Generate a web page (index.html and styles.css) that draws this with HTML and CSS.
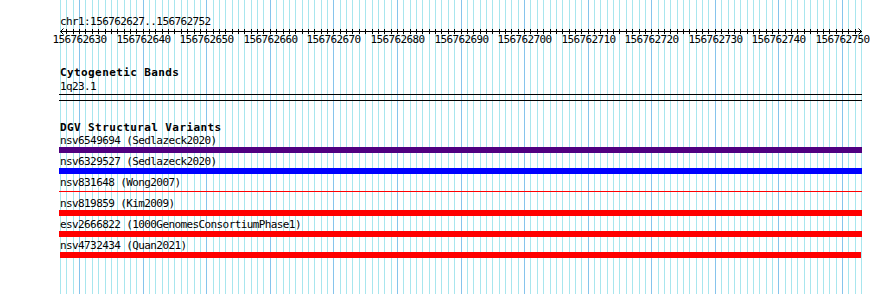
FILE: index.html
```html
<!DOCTYPE html>
<html lang="en">
<head>
    <meta charset="UTF-8">
    <title>Genome Browser - chr1:156762627..156762752</title>
    <link rel="stylesheet" href="styles.css">
</head>
<body>
    <div class="browser">
        <!-- base position guidelines, filled in by the script below -->
        <svg class="guides" id="guides" width="890" height="294" shape-rendering="crispEdges"></svg>

        <div class="tracks">
            <div class="position">chr1:156762627..156762752</div>
            <svg class="ruler" id="ruler" width="890" height="19" shape-rendering="crispEdges"></svg>

            <section class="track cyto">
                <div class="track-title">Cytogenetic Bands</div>
                <div class="label">1q23.1</div>
                <div class="band"></div>
            </section>

            <section class="track dgv">
                <div class="track-title">DGV Structural Variants</div>
                <div class="item">
                    <div class="label">nsv6549694 (Sedlazeck2020)</div>
                    <div class="bar purple"></div>
                </div>
                <div class="item">
                    <div class="label">nsv6329527 (Sedlazeck2020)</div>
                    <div class="bar blue"></div>
                </div>
                <div class="item">
                    <div class="label">nsv831648 (Wong2007)</div>
                    <div class="bar thin"></div>
                </div>
                <div class="item">
                    <div class="label">nsv819859 (Kim2009)</div>
                    <div class="bar red"></div>
                </div>
                <div class="item">
                    <div class="label">esv2666822 (1000GenomesConsortiumPhase1)</div>
                    <div class="bar red"></div>
                </div>
                <div class="item">
                    <div class="label">nsv4732434 (Quan2021)</div>
                    <div class="bar red inside"></div>
                </div>
            </section>
        </div>
    </div>

    <script>
        // Ventana: 126 bases entre x=60 y x=861
        const start = 156762627;
        const bases = 126;
        const left = 60;
        const span = 801;
        const ns = 'http://www.w3.org/2000/svg';

        function baseX(i) {
            return left + Math.round(i * span / bases);
        }

        function add(parent, tag, attrs, text) {
            const el = document.createElementNS(ns, tag);
            for (const [k, v] of Object.entries(attrs)) el.setAttribute(k, v);
            if (text) el.textContent = text;
            parent.appendChild(el);
            return el;
        }

        const guides = document.getElementById('guides');
        for (let i = 0; i <= bases; i++) {
            const major = (start + i) % 10 === 0;
            add(guides, 'rect', {
                x: baseX(i), y: 0, width: 1, height: 294,
                class: major ? 'guide major' : 'guide'
            });
        }

        // Regla: eje en y=3 (pagina y=31)
        const ruler = document.getElementById('ruler');
        add(ruler, 'rect', { x: 60, y: 3, width: 802, height: 1, class: 'ink' });
        add(ruler, 'path', { d: 'M60.5 3.5 L63.5 0.5 M60.5 3.5 L63.5 6.5', class: 'arrow' });
        add(ruler, 'path', { d: 'M861.5 3.5 L858.5 0.5 M861.5 3.5 L858.5 6.5', class: 'arrow' });
        for (let i = 1; i < bases; i++) {
            add(ruler, 'rect', { x: baseX(i), y: 1, width: 1, height: 5, class: 'ink' });
            if ((start + i) % 10 === 0) {
                add(ruler, 'text', { x: baseX(i) + 0.5, y: 15, class: 'ruler-label' }, String(start + i));
            }
        }
    </script>
</body>
</html>
```

FILE: styles.css
```css
body {
    margin: 0;
    background-color: #fff;
    color: #000;
    font-family: "DejaVu Sans Mono", "Liberation Mono", monospace;
    font-size: 11px;
}

.browser {
    position: relative;
    width: 890px;
    height: 294px;
    overflow: hidden;
}

/* Lineas guia de cada base */
.guides {
    position: absolute;
    top: 0;
    left: 0;
}
.guide {
    fill: #a8e6ee;
}
.guide.major {
    fill: #86c4ec;
}

.tracks {
    position: relative;
    padding-top: 15px;
}

.position,
.label {
    line-height: 13px;
    letter-spacing: -0.6px;
    white-space: nowrap;
}
.position {
    padding-left: 60px;
}

/* Regla */
.ruler {
    display: block;
}
.ink {
    fill: #000;
}
.arrow {
    stroke: #000;
    stroke-width: 1;
    fill: none;
    shape-rendering: auto;
}
.ruler-label {
    font-family: "DejaVu Sans Mono", "Liberation Mono", monospace;
    font-size: 11px;
    letter-spacing: -0.6px;
    text-anchor: middle;
    fill: #000;
}

/* Pistas */
.track {
    margin-left: 59px;
    width: 803px;
}
.track .label {
    padding-left: 1px;
}
.track-title {
    font-weight: bold;
    letter-spacing: 0.4px;
    line-height: 13px;
    padding-left: 1px;
    white-space: nowrap;
}

.cyto {
    margin-top: 19px;
}
.cyto .label {
    margin-top: 1px;
}
.band {
    height: 5px;
    margin-top: 1px;
    border-top: 1px solid #000;
    border-bottom: 1px solid #000;
}

.dgv {
    margin-top: 20px;
}
.item {
    padding-bottom: 2px;
}
.bar {
    height: 6px;
}
.bar.purple {
    background-color: #500080;
}
.bar.blue {
    background-color: #0000ff;
}
.bar.red {
    background-color: #ff0000;
}
.bar.thin {
    height: 1px;
    margin: 2px 0 3px;
    background-color: #ff0000;
}
.bar.inside {
    margin: 0 1px;
}
```
